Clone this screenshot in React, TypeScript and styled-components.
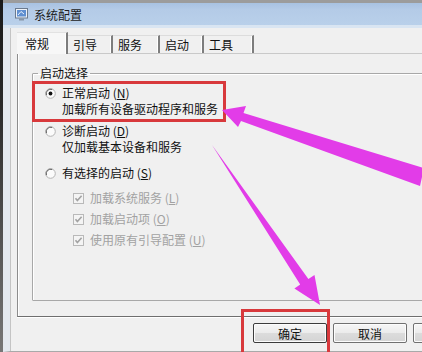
import React from "react";
import styled, { createGlobalStyle } from "styled-components";

const Global = createGlobalStyle`
  html, body { margin: 0; padding: 0; background: #f0f0f0; }
  body { font-family: "Noto Sans CJK SC", "Noto Sans", sans-serif; }
`;

const Screen = styled.div`
  position: relative;
  width: 422px;
  height: 352px;
  overflow: hidden;
  display: flex;
  background: #f0f0f0;
`;

const DarkEdge = styled.div`
  width: 3px;
  flex: none;
  background: linear-gradient(#1a1a1a, #2a2a2a 30%, #777 100%);
`;

const Window = styled.div`
  width: 480px;
  flex: none;
  display: flex;
  flex-direction: column;
`;

const TopStrip = styled.div`
  height: 3px;
  background: #9c9c9c;
`;

const TitleBar = styled.div`
  height: 22px;
  display: flex;
  align-items: center;
  gap: 6px;
  padding-left: 12px;
  background: linear-gradient(#a8c2e2, #b4cbe7 30%, #b9d0ea);
  font-size: 12px;
  color: #1c1c1c;
`;

const FrameStrip = styled.div`
  height: 3px;
  background: #d9e5f2;
`;

const Body = styled.div`
  flex: 1;
  display: flex;
  border-left: 7px solid #e4e9ef;
  box-shadow: inset 1px 0 0 #c4c4c4;
  border-bottom: 1px solid #a9a9a9;
  background: #f0f0f0;
  flex-direction: column;
`;

const Client = styled.div`
  display: flex;
  flex-direction: column;
  padding-left: 7px;
  padding-top: 3px;
`;

const TabRow = styled.div`
  display: flex;
  align-items: flex-end;
  height: 22px;
`;

const Tab = styled.div<{ $active?: boolean; $w: number }>`
  box-sizing: border-box;
  width: ${(p) => p.$w}px;
  height: ${(p) => (p.$active ? 22 : 18)}px;
  padding-left: ${(p) => (p.$active ? 8 : 5)}px;
  display: flex;
  align-items: center;
  font-size: 12px;
  color: #111;
  background: ${(p) => (p.$active ? "#f7f7f7" : "#f0f0f0")};
  border-top: 1px solid ${(p) => (p.$active ? "#e2e2e2" : "#dcdcdc")};
  border-right: 2px solid #7d7d7d;
  box-shadow: inset -1px 0 0 #ffffff;
  margin-bottom: ${(p) => (p.$active ? -1 : 0)}px;
  position: relative;
  z-index: ${(p) => (p.$active ? 1 : 0)};
`;

const Panel = styled.div`
  border-top: 1px solid #c9c9c9;
  border-left: 1px solid #8d8d8d;
  border-bottom: 1px solid #6f6f6f;
  box-shadow: inset 1px 0 0 #ffffff, 0 1px 0 #ffffff;
  padding: 12px 0 15px 14px;
`;

const Group = styled.fieldset`
  box-sizing: border-box;
  height: 235px;
  margin: 0;
  padding: 5px 0 0 12px;
  border: 1px solid #a8a8a8;
  border-radius: 1px;
  box-shadow: inset 1px 1px 0 #fff;
  display: flex;
  flex-direction: column;
`;

const Legend = styled.legend`
  font-size: 12px;
  line-height: 14px;
  padding: 0 2px;
  margin-left: -7px;
  color: #111;
`;

const Option = styled.div<{ $gap: number }>`
  display: flex;
  margin-top: ${(p) => p.$gap}px;
`;

const RadioCol = styled.div`
  width: 17px;
  height: 16px;
  display: flex;
  align-items: center;
  flex: none;
`;

const Lines = styled.div`
  display: flex;
  flex-direction: column;
`;

const Line = styled.div<{ $gray?: boolean }>`
  font-size: 12px;
  line-height: 16px;
  height: 16px;
  color: ${(p) => (p.$gray ? "#a2a2a2" : "#111")};
  white-space: nowrap;
`;

const CheckRow = styled.div`
  display: flex;
  align-items: center;
  height: 20px;
  margin-left: 28px;
  gap: 6px;
`;

const CheckList = styled.div`
  display: flex;
  flex-direction: column;
  gap: 1px;
  margin-top: 7px;
`;

const ButtonRow = styled.div`
  display: flex;
  gap: 6px;
  padding-left: 236px;
  margin-top: 6px;
  margin-bottom: 6px;
`;

const Button = styled.div<{ $default?: boolean }>`
  box-sizing: border-box;
  width: 74px;
  height: 20px;
  flex: none;
  display: flex;
  align-items: center;
  justify-content: center;
  font-size: 12px;
  color: #111;
  border: 1px solid ${(p) => (p.$default ? "#3c3c3c" : "#707070")};
  border-radius: 2px;
  background: linear-gradient(#f6f6f6, #ebebeb 50%, #dcdcdc 51%, #d4d4d4);
  box-shadow: inset 0 0 0 1px #fcfcfc;
`;

const Highlight = styled.div<{ $x: number; $y: number; $w: number; $h: number }>`
  position: absolute;
  left: ${(p) => p.$x}px;
  top: ${(p) => p.$y}px;
  width: ${(p) => p.$w}px;
  height: ${(p) => p.$h}px;
  box-sizing: border-box;
  border: 3px solid #d8393c;
  pointer-events: none;
`;

const Overlay = styled.svg`
  position: absolute;
  left: 0;
  top: 0;
  pointer-events: none;
`;

const Mn = ({ k }: { k: string }) => (
  <>
    {" ("}
    <u>{k}</u>
    {")"}
  </>
);

const Radio = ({ on }: { on?: boolean }) => (
  <svg width="11" height="11" viewBox="0 0 11 11">
    <circle cx="5.5" cy="5.5" r="4.8" fill="#fbfbfb" stroke="#b4b4b4" strokeWidth="1" />
    <path d="M1.4 7.2 A4.6 4.6 0 0 1 7.2 1.4" fill="none" stroke="#5a5a5a" strokeWidth="1" />
    {on && <circle cx="5.5" cy="5.5" r="1.9" fill="#111" />}
  </svg>
);

const Check = () => (
  <svg width="11" height="11" viewBox="0 0 11 11">
    <rect x="0.5" y="0.5" width="10" height="10" fill="#f4f4f4" stroke="#b9b9b9" />
    <path d="M2.5 5.2 L4.4 7.6 L8.6 2.8" fill="none" stroke="#a3a3a3" strokeWidth="1.6" />
  </svg>
);

const AppIcon = () => (
  <svg width="13" height="13" viewBox="0 0 13 13">
    <rect x="0.5" y="0.5" width="12" height="9.5" fill="#eef2f7" stroke="#6b7a8e" />
    <rect x="2" y="2" width="9" height="6.5" fill="#5f8fd0" />
    <path d="M3 7 L6 3.5 L9 6" fill="none" stroke="#e8f0fb" strokeWidth="1" />
    <rect x="4" y="10.5" width="5" height="2" fill="#8895a6" />
  </svg>
);

const checks = [
  { t: "加载系统服务", k: "L" },
  { t: "加载启动项", k: "O" },
  { t: "使用原有引导配置", k: "U" },
];

const tabs = [
  { t: "常规", w: 51, active: true },
  { t: "引导", w: 45 },
  { t: "服务", w: 47 },
  { t: "启动", w: 44 },
  { t: "工具", w: 50 },
];

export default function App() {
  return (
    <>
      <Global />
      <Screen>
        <DarkEdge />
        <Window>
          <TopStrip />
          <TitleBar>
            <AppIcon />
            <span>系统配置</span>
          </TitleBar>
          <FrameStrip />
          <Body>
            <Client>
              <TabRow>
                {tabs.map((tb) => (
                  <Tab key={tb.t} $active={tb.active} $w={tb.w}>
                    {tb.t}
                  </Tab>
                ))}
              </TabRow>
              <Panel>
                <Group>
                  <Legend>启动选择</Legend>
                  <Option $gap={0}>
                    <RadioCol>
                      <Radio on />
                    </RadioCol>
                    <Lines>
                      <Line>
                        正常启动<Mn k="N" />
                      </Line>
                      <Line>加载所有设备驱动程序和服务</Line>
                    </Lines>
                  </Option>
                  <Option $gap={6}>
                    <RadioCol>
                      <Radio />
                    </RadioCol>
                    <Lines>
                      <Line>
                        诊断启动<Mn k="D" />
                      </Line>
                      <Line>仅加载基本设备和服务</Line>
                    </Lines>
                  </Option>
                  <Option $gap={10}>
                    <RadioCol>
                      <Radio />
                    </RadioCol>
                    <Lines>
                      <Line>
                        有选择的启动<Mn k="S" />
                      </Line>
                    </Lines>
                  </Option>
                  <CheckList>
                    {checks.map((c) => (
                      <CheckRow key={c.k}>
                        <Check />
                        <Line $gray>
                          {c.t}
                          <Mn k={c.k} />
                        </Line>
                      </CheckRow>
                    ))}
                  </CheckList>
                </Group>
              </Panel>
              <ButtonRow>
                <Button $default>确定</Button>
                <Button>取消</Button>
                <Button />
              </ButtonRow>
            </Client>
          </Body>
        </Window>

        <Highlight $x={32} $y={81} $w={194} $h={41} />
        <Highlight $x={241} $y={309} $w={89} $h={50} />

        <Overlay width="422" height="352" viewBox="0 0 422 352">
          <polygon
            fill="#e23ce8"
            points="222,110 246,106 243.5,113 424,168 420,186 241,121 238,127"
          />
          <polygon
            fill="#e23ce8"
            points="212,145 308.4,279 314.5,275 320,305 294.4,288.5 300.2,284.6"
          />
        </Overlay>
      </Screen>
    </>
  );
}
